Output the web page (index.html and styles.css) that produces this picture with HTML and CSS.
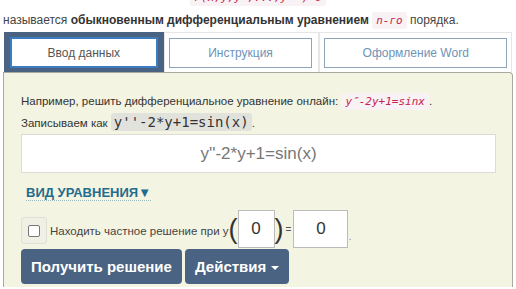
FILE: index.html
```html
<!DOCTYPE html>
<html lang="ru">
<head>
    <meta charset="UTF-8">
    <title>Дифференциальные уравнения онлайн</title>
    <link rel="stylesheet" href="styles.css">
</head>
<body>
    <p class="formula"><code class="pink">F(x,y,y',...,y<sup>(n)</sup>)=0</code></p>
    <p class="intro">называется <b>обыкновенным дифференциальным уравнением</b> <code class="pink">n-го</code> порядка.</p>

    <div class="tabs">
        <div class="tab active"><span class="tab-btn">Ввод данных</span></div>
        <div class="tab"><span class="tab-btn">Инструкция</span></div>
        <div class="tab wide"><span class="tab-btn">Оформление Word</span></div>
    </div>

    <div class="panel">
        <p class="line">Например, решить дифференциальное уравнение онлайн: <code class="pink">y″-2y+1=sinx</code>.</p>
        <p class="line">Записываем как <code class="grey">y''-2*y+1=sin(x)</code>.</p>
        <div class="eq-input">y''-2*y+1=sin(x)</div>

        <a class="eq-type">ВИД УРАВНЕНИЯ▼</a>

        <div class="cond">
            <span class="check-wrap"><span class="check"></span></span>
            <span class="cond-text">Находить частное решение при y</span>
            <span class="paren">(</span>
            <span class="num small">0</span>
            <span class="paren">)</span>
            <span class="eq">=</span>
            <span class="num">0</span>
            <span class="dot">.</span>
        </div>

        <div class="actions">
            <button class="btn">Получить решение</button>
            <button class="btn">Действия <span class="caret"></span></button>
        </div>
    </div>
</body>
</html>
```

FILE: styles.css
```css
body {
    margin: 0;
    font-family: "Liberation Sans", Arial, sans-serif;
    color: #333;
    background: #fff;
    overflow: hidden;
}
p {
    margin: 0;
}
code {
    font-family: "DejaVu Sans Mono", "Liberation Mono", monospace;
}
.pink {
    color: #c7254e;
    background: #f9f2f4;
    font-style: italic;
    font-size: 11px;
    padding: 2px 4px;
    border-radius: 3px;
}
.formula {
    text-align: center;
    margin-top: -14px;
    height: 23px;
    line-height: 16px;
    font-size: 13px;
}
.formula sup {
    font-size: 8px;
}
.intro {
    font-size: 12px;
    padding-left: 3px;
    height: 23px;
    line-height: 22px;
    color: #444;
}
.intro b {
    color: #333;
}
.tabs {
    display: flex;
    margin: 0 4px 0 4px;
    height: 40px;
}
.tab {
    width: 160px;
    box-sizing: border-box;
    padding: 5px 5px 4px 5px;
    border: 1px solid #e6e6e6;
    border-bottom: none;
    display: flex;
}
.tab + .tab {
    width: 156px;
    padding-left: 4px;
    padding-right: 6px;
}
.tab.wide {
    width: 193px;
    padding-right: 4px;
}
.tab-btn {
    flex: 1;
    display: flex;
    align-items: center;
    justify-content: center;
    border: 1px solid #8ea4ba;
    background: #fff;
    color: #6e93b9;
    font-size: 12px;
}
.tab.active {
    background: #4a6382;
    border-color: #4a6382;
    padding: 4px 5px 4px 5px;
}
.tab.active .tab-btn {
    border: 2px solid #3c7cc0;
    color: #555;
}
.panel {
    margin: 0 3px;
    border: 1px solid #a9a9a0;
    border-bottom: none;
    border-radius: 0 4px 0 0;
    background: #f4f4e3;
    padding: 18px 16px 0 17px;
    height: 196px;
    overflow: hidden;
}
.line {
    font-size: 11.5px;
    line-height: 21px;
    color: #333;
}
.grey {
    background: #e2e2dc;
    color: #333;
    font-size: 14px;
    padding: 1px 3px;
    border-radius: 3px;
}
.eq-input {
    height: 37px;
    background: #fff;
    border: 1px solid #dcdcd4;
    display: flex;
    align-items: center;
    justify-content: center;
    font-size: 17px;
    color: #777;
}
.eq-type {
    display: inline-block;
    margin: 13px 0 0 5px;
    font-size: 13px;
    font-weight: bold;
    color: #1f6d8e;
    border-bottom: 1px dotted #9bb;
    line-height: 14px;
}
.cond {
    display: flex;
    align-items: center;
    margin-top: 9px;
    height: 38px;
    font-size: 11.5px;
}
.check-wrap {
    align-self: flex-end;
    margin-bottom: 4px;
    width: 24px;
    height: 25px;
    border: 1px solid #e0e0d8;
    border-radius: 3px;
    background: #f0f0e4;
    display: flex;
    align-items: center;
    justify-content: center;
    margin-right: 3px;
}
.check {
    width: 10px;
    height: 10px;
    border: 1px solid #777;
    border-radius: 2px;
    background: #fff;
}
.cond-text {
    color: #444;
    margin-top: 3px;
}
.paren {
    font-size: 27px;
    font-weight: 300;
    color: #333;
    line-height: 30px;
}
.num {
    width: 55px;
    height: 38px;
    box-sizing: border-box;
    border: 1px solid #bbb;
    background: #fff;
    display: flex;
    align-items: center;
    justify-content: center;
    font-size: 17px;
    color: #333;
}
.num.small {
    width: 37px;
}
.eq {
    font-size: 10px;
    margin: 0 2px 0 2px;
    color: #555;
}
.dot {
    align-self: flex-end;
    margin-bottom: 6px;
    color: #999;
}
.actions {
    display: flex;
    gap: 3px;
    margin-top: 1px;
}
.btn {
    height: 35px;
    border: none;
    border-radius: 4px;
    background: #4a6382;
    color: #fff;
    font-family: "Liberation Sans", Arial, sans-serif;
    font-size: 15px;
    font-weight: bold;
    padding: 0 10px;
    white-space: nowrap;
}
.btn:first-child {
    width: 161px;
}
.caret {
    display: inline-block;
    width: 0;
    height: 0;
    border-left: 4px solid transparent;
    border-right: 4px solid transparent;
    border-top: 4px solid #fff;
    vertical-align: middle;
    margin-left: 1px;
}
```
